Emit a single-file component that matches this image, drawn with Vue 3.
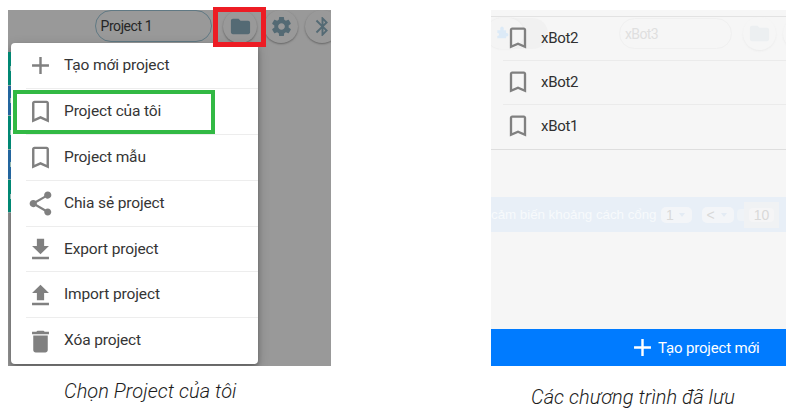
<script setup>
const icons = {
  plus: 'M19 13h-6v6h-2v-6H5v-2h6V5h2v6h6v2z',
  bookmark: 'M17 3H7c-1.1 0-2 .9-2 2v16l7-3 7 3V5c0-1.1-.9-2-2-2zm0 15l-5-2.18L7 18V5h10v13z',
  share: 'M18 16.08c-.76 0-1.44.3-1.96.77L8.91 12.7c.05-.23.09-.46.09-.7s-.04-.47-.09-.7l7.05-4.11c.54.5 1.25.81 2.04.81 1.66 0 3-1.34 3-3s-1.34-3-3-3-3 1.34-3 3c0 .24.04.47.09.7L8.04 9.81C7.5 9.31 6.79 9 6 9c-1.66 0-3 1.34-3 3s1.34 3 3 3c.79 0 1.5-.31 2.04-.81l7.12 4.16c-.05.21-.08.43-.08.65 0 1.61 1.31 2.92 2.92 2.92s2.92-1.31 2.92-2.92-1.31-2.92-2.92-2.92z',
  download: 'M19 9h-4V3H9v6H5l7 7 7-7zM5 18v2h14v-2H5z',
  upload: 'M9 16h6v-6h4l-7-7-7 7h4zm-4 2h14v2H5z',
  trash: 'M6 19c0 1.1.9 2 2 2h8c1.1 0 2-.9 2-2V7H6v12zM19 4h-3.5l-1-1h-5l-1 1H5v2h14V4z',
  folder: 'M10 4H4c-1.1 0-2 .9-2 2v12c0 1.1.9 2 2 2h16c1.1 0 2-.9 2-2V8c0-1.1-.9-2-2-2h-8l-2-2z',
  gear: 'M19.43 12.98c.04-.32.07-.64.07-.98s-.03-.66-.07-.98l2.11-1.65c.19-.15.24-.42.12-.64l-2-3.46c-.12-.22-.39-.3-.61-.22l-2.49 1c-.52-.4-1.08-.73-1.69-.98l-.38-2.65C14.46 2.18 14.25 2 14 2h-4c-.25 0-.46.18-.49.42l-.38 2.65c-.61.25-1.17.59-1.69.98l-2.49-1c-.23-.09-.49 0-.61.22l-2 3.46c-.13.22-.07.49.12.64l2.11 1.65c-.04.32-.07.65-.07.98s.03.66.07.98l-2.11 1.65c-.19.15-.24.42-.12.64l2 3.46c.12.22.39.3.61.22l2.49-1c.52.4 1.08.73 1.69.98l.38 2.65c.03.24.24.42.49.42h4c.25 0 .46-.18.49-.42l.38-2.65c.61-.25 1.17-.59 1.69-.98l2.49 1c.23.09.49 0 .61-.22l2-3.46c.12-.22.07-.49-.12-.64l-2.11-1.65zM12 15.5c-1.93 0-3.5-1.57-3.5-3.5s1.57-3.5 3.5-3.5 3.5 1.57 3.5 3.5-1.57 3.5-3.5 3.5z',
  bluetooth: 'M17.71 7.71L12 2h-1v7.59L6.41 5 5 6.41 10.59 12 5 17.59 6.41 19 11 14.41V22h1l5.71-5.71-4.3-4.29 4.3-4.29zM13 5.83l1.88 1.88L13 9.59V5.83zm1.88 10.46L13 18.17v-3.76l1.88 1.88z',
  puzzle: 'M4 8h5V5c0-2 1-3 3-3s3 1 3 3v3h4v5c3 0 4 1 4 3s-1 3-4 3v3H4v-4c2 0 3-1 3-2.500s-1-2.500-3-2.500z',
}
const menu = [
  { icon: 'plus', label: 'Tạo mới project' },
  { icon: 'bookmark', label: 'Project của tôi', marked: true },
  { icon: 'bookmark', label: 'Project mẫu' },
  { icon: 'share', label: 'Chia sẻ project' },
  { icon: 'download', label: 'Export project' },
  { icon: 'upload', label: 'Import project' },
  { icon: 'trash', label: 'Xóa project' },
]
const saved = ['xBot2', 'xBot2', 'xBot1']
</script>

<template>
  <main class="page">
    <figure class="left">
      <div class="screen dim">
        <header class="toolbar">
          <div class="name">Project 1</div>
          <div v-for="i in ['folder', 'gear', 'bluetooth']" :key="i" class="round">
            <svg viewBox="0 0 24 24"><path :d="icons[i]" /></svg>
          </div>
        </header>
        <ul class="menu">
          <li v-for="m in menu" :key="m.label">
            <svg viewBox="0 0 24 24"><path :d="icons[m.icon]" /></svg>
            <span>{{ m.label }}</span>
            <b v-if="m.marked" class="green"></b>
          </li>
        </ul>
        <div class="blocks"><i v-for="n in 5" :key="n"></i></div>
      </div>
      <b class="red"></b>
      <figcaption>Chọn Project của tôi</figcaption>
    </figure>

    <figure class="right">
      <div class="screen pale">
        <div class="ghost">
          <div class="switch">
            <div class="knob"><svg viewBox="0 0 24 24"><path :d="icons.puzzle" /></svg></div>
          </div>
          <div class="ghost-name">xBot3</div>
          <div class="ghost-round"><svg viewBox="0 0 24 24"><path :d="icons.folder" /></svg></div>
          <div class="ghost-round next"></div>
        </div>
        <ul class="list">
          <li v-for="(s, n) in saved" :key="n">
            <svg viewBox="0 0 24 24"><path :d="icons.bookmark" /></svg>
            <span>{{ s }}</span>
          </li>
        </ul>
        <div class="band">
          <span class="band-text">cảm biến khoảng cách cổng</span>
          <span class="pill one">1<em></em></span>
          <span class="pill less">&lt;<em></em></span>
          <span class="slot"></span>
          <span class="value"><span>10</span></span>
        </div>
        <div class="create">
          <svg viewBox="0 0 24 24"><path :d="icons.plus" /></svg>
          <span>Tạo project mới</span>
        </div>
      </div>
      <figcaption>Các chương trình đã lưu</figcaption>
    </figure>
  </main>
</template>

<style>
body { background: #fff; }
</style>

<style scoped>
* { box-sizing: border-box; }
.page {
  display: flex;
  gap: 160px;
  width: 803px;
  height: 419px;
  padding: 10px 0 0 8px;
  overflow: hidden;
  font-family: Roboto, sans-serif;
  color: #353535;
}
figure { position: relative; margin: 0; }
.left { width: 323px; }
.right { width: 295px; }
.screen { position: relative; height: 356px; overflow: hidden; }
ul { margin: 0; padding: 0; list-style: none; }
svg { display: block; flex: none; fill: currentColor; }
.dim { background: #999; }
.toolbar {
  display: flex;
  gap: 7px;
  width: 360px;
  padding-left: 87px;
}
.name {
  width: 117px;
  height: 32px;
  margin-right: 4px;
  padding-left: 4.5px;
  border: 1px solid #607984;
  border-radius: 16px;
  font-size: 14px;
  letter-spacing: -.42px;
  line-height: 31px;
  color: #262626;
}
.round {
  display: grid;
  place-items: center;
  width: 34px;
  height: 33px;
  border-radius: 50%;
  background: #999;
  box-shadow: 0 1px 2px #666;
  color: #546a74;
}
.round svg { width: 23px; height: 23px; }
.blocks {
  position: absolute;
  top: 42px;
  left: 0;
  display: grid;
  grid-template-rows: 34px 30px 34px 30px 33px;
  width: 3px;
}
.blocks i {
  display: flex;
  align-items: center;
  justify-content: flex-end;
  background: #008773;
  border-bottom: 1px solid #8da5a4;
}
.blocks i:nth-child(even) { background: #23659e; }
.blocks i::after { content: ''; width: 1px; height: 5px; background: #91b8b2; }
.menu {
  position: absolute;
  top: 33px;
  left: 3px;
  width: 246.500px;
  height: 321px;
  border-radius: 4px;
  background: #fff;
  box-shadow: 0 3px 4px rgba(0, 0, 0, .2), 0 4px 12px rgba(0, 0, 0, .25);
}
.menu li {
  position: relative;
  display: flex;
  align-items: center;
  gap: 9.5px;
  height: 45.9px;
  padding-left: 14.500px;
  font-size: 15.5px;
  letter-spacing: -.13px;
}
.menu li + li::before {
  content: '';
  position: absolute;
  top: -1px;
  left: 15px;
  right: 0;
  height: 1px;
  background: #ededed;
}
.menu svg { width: 29px; height: 29px; color: #808080; }
.menu span { position: relative; top: -1px; }
.green {
  position: absolute;
  left: 2px;
  top: 1px;
  width: 202px;
  height: 44px;
  border: 4px solid #32b944;
}
.red {
  position: absolute;
  left: 205px;
  top: -3px;
  width: 53px;
  height: 40px;
  border: 5px solid #ed1c24;
}
figcaption {
  font-size: 20px;
  font-style: italic;
  font-weight: 300;
  letter-spacing: .05px;
  line-height: 24px;
  color: #1c1c1c;
  white-space: nowrap;
}
.left figcaption { padding: 13px 0 0 56px; }
.right figcaption { padding: 19px 0 0 40px; }
.pale {
  display: flex;
  flex-direction: column;
  padding-top: 6px;
  background: #f6f6f6;
}
.list { position: relative; border-top: 1px solid #e2e2e2; border-bottom: 1px solid #dedede; }
.list li {
  position: relative;
  display: flex;
  align-items: center;
  gap: 9px;
  height: 44px;
  padding: 0 0 1.5px 13px;
  font-size: 15px;
  letter-spacing: -.3px;
  color: #303030;
}
.list li:last-child { height: 43.500px; }
.list li + li::before {
  content: '';
  position: absolute;
  top: -1px;
  left: 12px;
  right: 0;
  height: 1px;
  background: #ebebeb;
}
.list svg { width: 28px; height: 28px; color: #808080; }
.ghost { position: absolute; inset: 8px 0 auto; height: 34px; }
.switch { position: absolute; left: -5px; top: 0; width: 62px; height: 31px; border-radius: 16px; background: #f1f1f1; }
.knob { width: 38px; height: 31px; padding: 7px 9px; border-radius: 16px; background: #f4f4f4; box-shadow: 0 0 2px #e6e6e6; color: #dceaf7; }
.knob svg { width: 14px; height: 15px; }
.ghost-name {
  position: absolute;
  left: 128px;
  top: 0;
  width: 113px;
  height: 31px;
  padding-left: 5px;
  border: 1px solid #f0f0f0;
  border-radius: 16px;
  font-size: 14px;
  letter-spacing: -.6px;
  line-height: 30px;
  color: #dfdfdf;
}
.ghost-round {
  position: absolute;
  left: 251.500px;
  top: -1px;
  display: grid;
  place-items: center;
  width: 33px;
  height: 33px;
  border-radius: 50%;
  background: #f6f6f6;
  box-shadow: 0 1px 2px #ebebeb;
  color: #eceff1;
}
.ghost-round svg { width: 23px; height: 23px; }
.ghost-round.next { left: 292px; }
.band {
  display: flex;
  align-items: center;
  height: 35px;
  margin-top: 47.500px;
  background: #e8eff7;
  font-family: "Liberation Sans", sans-serif;
  white-space: nowrap;
}
.band > * { flex: none; }
.band-text { width: 170px; font-size: 13.4px; letter-spacing: -.05px; color: #f7fafc; }
.pill {
  display: flex;
  align-items: center;
  justify-content: space-between;
  width: 31px;
  height: 16px;
  padding: 0 7px 0 5px;
  border-radius: 5px;
  background: #f3f5f8;
  font-size: 14px;
  color: #d9d9d9;
}
.pill em { border: 3px solid transparent; border-top: 4px solid #e3ebf4; border-bottom: 0; }
.less { width: 32px; margin-left: 9.500px; }
.slot { width: 7px; height: 12px; margin-left: 3.500px; border-radius: 4px 0 0 4px; background: #eff3f7; }
.value { display: grid; place-items: center; width: 35px; height: 26px; background: #f0f2f4; }
.value span { width: 25px; height: 14px; border-radius: 4px; background: #f5f5f6; font-size: 14px; line-height: 15px; text-align: center; color: #d9d9d9; }
.create {
  display: flex;
  align-items: center;
  gap: 1px;
  height: 37px;
  margin-top: auto;
  padding-left: 137px;
  background: #007bff;
  color: #fff;
  font-size: 15px;
  letter-spacing: -.16px;
  white-space: nowrap;
}
.create svg { width: 29px; height: 29px; }
</style>
